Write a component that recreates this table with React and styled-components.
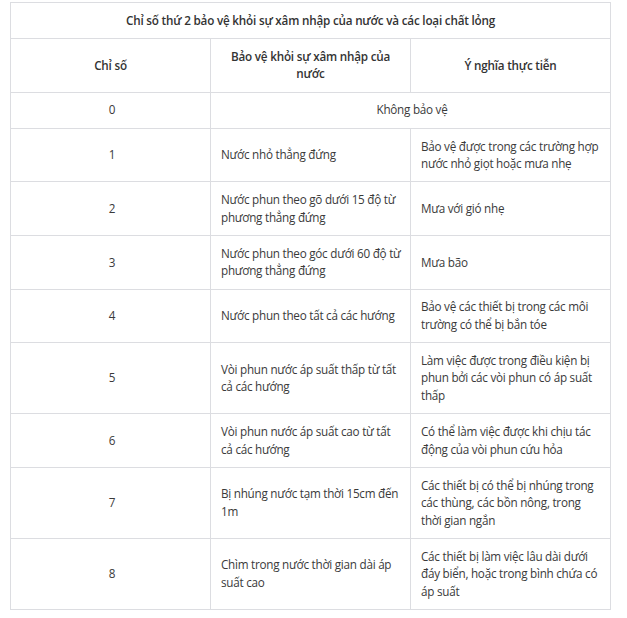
import React from 'react'
import styled, { createGlobalStyle } from 'styled-components'

const GlobalStyle = createGlobalStyle`
  html, body {
    margin: 0;
    padding: 0;
    background: #ffffff;
  }
`;

const Wrap = styled.div`
  padding: 2px 0 0 10px;
  font-family: "Open Sans", "Noto Sans", sans-serif;
  font-size: 11.7px;
  letter-spacing: -0.25px;
  color: #3a3a3a;
`;

const Table = styled.table`
  width: 600px;
  border-collapse: collapse;
  table-layout: fixed;
`;

const Col = styled.col`
  width: 200px;
`;

const Th = styled.th`
  border: 1px solid #dcdde1;
  padding: 8.8px 10px;
  line-height: 17.5px;
  font-weight: 600;
  letter-spacing: -0.2px;
  color: #333333;
  text-align: center;
  vertical-align: middle;
`;

const Td = styled.td`
  border: 1px solid #dcdde1;
  padding: 8.8px 7px 8.8px 10px;
  line-height: 17.5px;
  font-weight: 400;
  text-align: ${({ $center }) => ($center ? 'center' : 'left')};
  vertical-align: middle;
`;

const rows = [
  ['1', 'Nước nhỏ thẳng đứng', 'Bảo vệ được trong các trường hợp nước nhỏ giọt hoặc mưa nhẹ'],
  ['2', 'Nước phun theo gõ dưới 15 độ từ phương thẳng đứng', 'Mưa với gió nhẹ'],
  ['3', 'Nước phun theo góc dưới 60 độ từ phương thẳng đứng', 'Mưa bão'],
  ['4', 'Nước phun theo tất cả các hướng', 'Bảo vệ các thiết bị trong các môi trường có thể bị bắn tóe'],
  ['5', 'Vòi phun nước áp suất thấp từ tất cả các hướng', 'Làm việc được trong điều kiện bị phun bởi các vòi phun có áp suất thấp'],
  ['6', 'Vòi phun nước áp suất cao từ tất cả các hướng', 'Có thể làm việc được khi chịu tác động của vòi phun cứu hỏa'],
  ['7', 'Bị nhúng nước tạm thời 15cm đến 1m', 'Các thiết bị có thể bị nhúng trong các thùng, các bồn nông, trong thời gian ngắn'],
  ['8', 'Chìm trong nước thời gian dài áp suất cao', 'Các thiết bị làm việc lâu dài dưới đáy biển, hoặc trong bình chứa có áp suất'],
];

export default function App() {
  return (
    <Wrap>
      <GlobalStyle />
      <Table>
        <colgroup>
          <Col />
          <Col />
          <Col />
        </colgroup>
        <tbody>
          <tr>
            <Th colSpan={3}>Chỉ số thứ 2 bảo vệ khỏi sự xâm nhập của nước và các loại chất lỏng</Th>
          </tr>
          <tr>
            <Th>Chỉ số</Th>
            <Th>Bảo vệ khỏi sự xâm nhập của nước</Th>
            <Th>Ý nghĩa thực tiễn</Th>
          </tr>
          <tr>
            <Td $center>0</Td>
            <Td $center colSpan={2}>Không bảo vệ</Td>
          </tr>
          {rows.map(([idx, protect, meaning]) => (
            <tr key={idx}>
              <Td $center>{idx}</Td>
              <Td>{protect}</Td>
              <Td>{meaning}</Td>
            </tr>
          ))}
        </tbody>
      </Table>
    </Wrap>
  )
}
